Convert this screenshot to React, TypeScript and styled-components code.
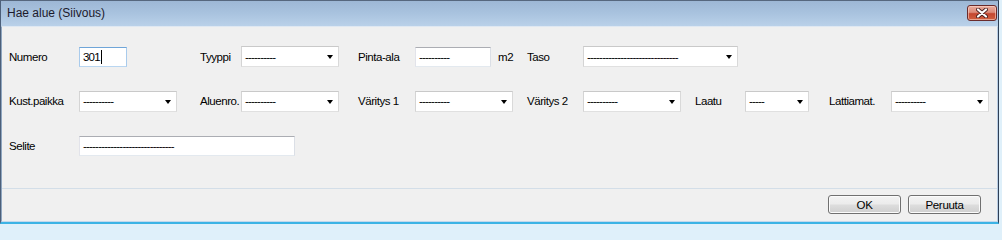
import styled, { createGlobalStyle } from "styled-components";

const GlobalStyle = createGlobalStyle`
  html, body {
    margin: 0;
    padding: 0;
    height: 224px;
    overflow: hidden;
    background: #dff0fa;
  }
  body {
    font-family: "Liberation Sans", Arial, sans-serif;
  }
`;

const Window = styled.div`
  width: 999px;
  height: 224px;
  box-sizing: border-box;
  display: flex;
  flex-direction: column;
  border-top: 1px solid #56677e;
  border-left: 1px solid #4c5f79;
  border-right: 1px solid #2f3f55;
  border-bottom: 2px solid #3cb3e5;
  background: #f0f0f0;
`;

const TitleBar = styled.div`
  height: 25px;
  flex: none;
  display: flex;
  align-items: center;
  padding-left: 6px;
  background: linear-gradient(to bottom, #9db7d5 0%, #a9c3df 50%, #bad1e9 100%);
`;

const Title = styled.span`
  flex: 1;
  font-size: 12px;
  color: #1c1a2c;
  padding-bottom: 1px;
`;

const CloseButton = styled.button`
  align-self: flex-start;
  margin: 4px 1px 0 0;
  width: 30px;
  height: 16px;
  padding: 0;
  display: flex;
  align-items: center;
  justify-content: center;
  border: 1px solid #6a2b2b;
  border-radius: 3px;
  box-shadow: inset 0 0 0 1px rgba(255, 220, 210, 0.55);
  background: linear-gradient(
    to bottom,
    #e9ab9d 0%,
    #dc8b79 45%,
    #c4462f 55%,
    #d0603f 100%
  );
`;

const Body = styled.div`
  flex: 1;
  display: flex;
  flex-direction: column;
  border-top: 1px solid #dfe8f2;
  border-left: 1px solid #8fa6c0;
  border-right: 1px solid #b8cde4;
  border-bottom: 1px solid #c3d8ec;
`;

const Form = styled.div`
  display: grid;
  grid-template-columns: 70px 121px 41px 117px 57px 112px 56px 112px 50px 84px 62px auto;
  grid-template-rows: 21px 21px 21px;
  row-gap: 23.5px;
  align-items: center;
  padding: 19px 0 0 7px;
`;

const Label = styled.span`
  font-size: 11.5px;
  letter-spacing: -0.45px;
  color: #000;
  white-space: nowrap;
`;

const Cell = styled.div<{ $span?: number }>`
  display: flex;
  align-items: center;
  gap: 7px;
  grid-column: span ${(p) => p.$span ?? 1};
`;

const TextBox = styled.div<{ $width: number; $focused?: boolean }>`
  width: ${(p) => p.$width}px;
  height: 20px;
  box-sizing: border-box;
  display: flex;
  align-items: center;
  padding-left: 3px;
  background: #fff;
  border: 1px solid;
  border-color: ${(p) =>
    p.$focused
      ? "#6fa5d8 #a9cbec #b9d6f1 #a9cbec"
      : "#abadb3 #dbdfe6 #e3e9ef #e2e3ea"};
`;

const ComboBox = styled.div<{ $width: number }>`
  width: ${(p) => p.$width}px;
  height: 21px;
  box-sizing: border-box;
  display: flex;
  align-items: center;
  padding: 0 5px 0 3px;
  background: #fff;
  border: 1px solid;
  border-color: #c9c9c9 #d9d9d9 #e0e0e0 #d4d4d4;
`;

const Value = styled.span`
  flex: 1;
  font-size: 11.5px;
  letter-spacing: -0.8px;
  color: #000;
  white-space: nowrap;
  display: flex;
  align-items: center;
`;

const Caret = styled.span`
  display: inline-block;
  width: 1px;
  height: 14px;
  margin-left: 1px;
  background: #000;
`;

const Arrow = styled.span`
  width: 0;
  height: 0;
  border-left: 3.5px solid transparent;
  border-right: 3.5px solid transparent;
  border-top: 4px solid #000;
  margin-top: 1px;
`;

const Footer = styled.div`
  margin-top: auto;
  display: flex;
  justify-content: flex-end;
  gap: 7px;
  padding: 6px 16px 7px 0;
  border-top: 1px solid #d3dee8;
`;

const Button = styled.button`
  width: 73px;
  height: 19px;
  padding: 0;
  font-family: "Liberation Sans", Arial, sans-serif;
  font-size: 11.5px;
  letter-spacing: -0.3px;
  color: #000;
  border: 1px solid #707070;
  border-radius: 3px;
  box-shadow: inset 0 0 0 1px #fbfbfb;
  background: linear-gradient(
    to bottom,
    #f3f3f3 0%,
    #ebebeb 48%,
    #dddddd 52%,
    #cfcfcf 100%
  );
`;

const DASH = "----------";

function Combo({ width, value = DASH }: { width: number; value?: string }) {
  return (
    <ComboBox $width={width}>
      <Value>{value}</Value>
      <Arrow />
    </ComboBox>
  );
}

export default function App() {
  return (
    <>
      <GlobalStyle />
      <Window>
        <TitleBar>
          <Title>Hae alue (Siivous)</Title>
          <CloseButton aria-label="Sulje">
            <svg width="12" height="10" viewBox="0 0 12 10">
              <path
                d="M2 1.5 L10 8.5 M10 1.5 L2 8.5"
                stroke="#4a2020"
                strokeWidth="4"
                strokeLinecap="round"
              />
              <path
                d="M2 1.5 L10 8.5 M10 1.5 L2 8.5"
                stroke="#ffffff"
                strokeWidth="2.2"
                strokeLinecap="round"
              />
            </svg>
          </CloseButton>
        </TitleBar>
        <Body>
          <Form>
            <Label>Numero</Label>
            <Cell>
              <TextBox $width={48} $focused>
                <Value>
                  301
                  <Caret />
                </Value>
              </TextBox>
            </Cell>
            <Label>Tyyppi</Label>
            <Cell>
              <Combo width={98} />
            </Cell>
            <Label>Pinta-ala</Label>
            <Cell>
              <TextBox $width={76}>
                <Value>{DASH}</Value>
              </TextBox>
              <Label>m2</Label>
            </Cell>
            <Label>Taso</Label>
            <Cell $span={5}>
              <Combo width={155} value={"-".repeat(30)} />
            </Cell>

            <Label>Kust.paikka</Label>
            <Cell>
              <Combo width={98} />
            </Cell>
            <Label>Aluenro.</Label>
            <Cell>
              <Combo width={98} />
            </Cell>
            <Label>Väritys 1</Label>
            <Cell>
              <Combo width={98} />
            </Cell>
            <Label>Väritys 2</Label>
            <Cell>
              <Combo width={98} />
            </Cell>
            <Label>Laatu</Label>
            <Cell>
              <Combo width={64} value="-----" />
            </Cell>
            <Label>Lattiamat.</Label>
            <Cell>
              <Combo width={98} />
            </Cell>

            <Label>Selite</Label>
            <Cell $span={5}>
              <TextBox $width={216}>
                <Value>{"-".repeat(30)}</Value>
              </TextBox>
            </Cell>
          </Form>
          <Footer>
            <Button>OK</Button>
            <Button>Peruuta</Button>
          </Footer>
        </Body>
      </Window>
    </>
  );
}
